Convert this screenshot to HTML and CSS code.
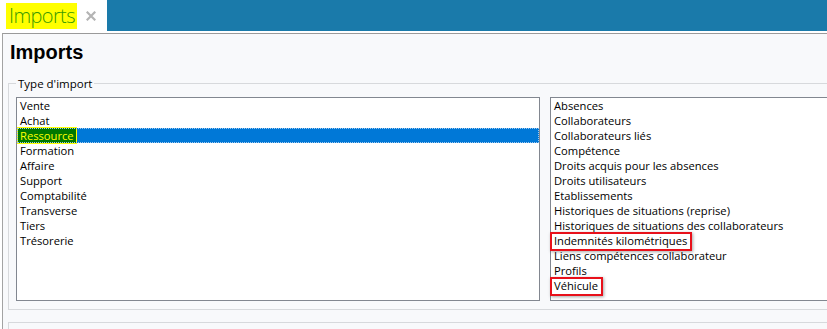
FILE: index.html
```html
<!DOCTYPE html>
<html lang="fr">
<head>
<meta charset="utf-8">
<title>Imports</title>
<link rel="stylesheet" href="styles.css">
</head>
<body>
<div class="tabbar">
  <div class="tab">
    <span class="tab-title">Imports</span>
    <svg class="tab-close" width="10" height="10" viewBox="0 0 10 10"><path d="M1.5 1.5 L8.5 8.5 M8.5 1.5 L1.5 8.5" stroke="#b4b4b4" stroke-width="2.2" stroke-linecap="square"/></svg>
  </div>
  <div class="tab-fill"></div>
</div>
<div class="panel">
  <h1 class="title">Imports</h1>
  <fieldset class="group">
    <legend class="group-legend">Type d'import</legend>
    <div class="lists">
      <ul class="listbox listbox-left">
        <li class="item">Vente</li>
        <li class="item">Achat</li>
        <li class="item item-selected"><span class="hl">Ressource</span></li>
        <li class="item">Formation</li>
        <li class="item">Affaire</li>
        <li class="item">Support</li>
        <li class="item">Comptabilité</li>
        <li class="item">Transverse</li>
        <li class="item">Tiers</li>
        <li class="item">Trésorerie</li>
      </ul>
      <ul class="listbox listbox-right">
        <li class="item">Absences</li>
        <li class="item">Collaborateurs</li>
        <li class="item">Collaborateurs liés</li>
        <li class="item">Compétence</li>
        <li class="item">Droits acquis pour les absences</li>
        <li class="item">Droits utilisateurs</li>
        <li class="item">Etablissements</li>
        <li class="item">Historiques de situations (reprise)</li>
        <li class="item">Historiques de situations des collaborateurs</li>
        <li class="item"><span class="mark">Indemnités kilométriques</span></li>
        <li class="item">Liens compétences collaborateur</li>
        <li class="item">Profils</li>
        <li class="item"><span class="mark">Véhicule</span></li>
      </ul>
    </div>
  </fieldset>
  <div class="group2"></div>
</div>
</body>
</html>
```
FILE: styles.css
```css
html, body {
  margin: 0;
  padding: 0;
  background: #ffffff;
  overflow: hidden;
}
body {
  width: 827px;
  height: 329px;
  font-family: "Open Sans", "Noto Sans", sans-serif;
}
.tabbar {
  display: flex;
  height: 31px;
  margin-bottom: 2px;
}
.tab {
  width: 107px;
  display: flex;
  align-items: center;
  background: #ffffff;
}
.tab-title {
  margin-left: 6px;
  margin-top: 1px;
  height: 26px;
  padding: 0 2px 0 3px;
  background: #ffff00;
  color: #3a9a00;
  font-family: "Open Sans", sans-serif;
  font-weight: 300;
  font-size: 20px;
  line-height: 26px;
  letter-spacing: -0.6px;
}
.tab-close {
  margin-left: 9px;
  margin-top: 1px;
}
.tab-fill {
  flex: 1;
  background: #1a7aaa;
}
.panel {
  margin-left: 2px;
  border-left: 1px solid #a3a3a3;
  border-top: 1px solid #9a9a9a;
  background: #f8f9fb;
  height: 295px;
  padding-left: 5px;
  overflow: hidden;
}
.title {
  margin: 0 0 0 2px;
  padding-top: 7px;
  font-family: "Liberation Sans", Arial, sans-serif;
  font-weight: bold;
  font-size: 20px;
  line-height: 23px;
  color: #000;
  height: 35px;
}
.group {
  margin: 0;
  width: 840px;
  border: 1px solid #d7d9dc;
  padding: 6px 0 6px 7px;
  box-sizing: border-box;
  height: 234px;
}
.group-legend {
  padding: 0 2px;
  margin-left: 0;
  font-size: 11.5px;
  line-height: 15px;
  color: #000;
}
.lists {
  display: flex;
  gap: 10px;
}
.listbox {
  list-style: none;
  margin: 0;
  padding: 0;
  height: 202px;
  background: #ffffff;
  border: 1px solid #828790;
}
.listbox-left {
  width: 522px;
}
.listbox-right {
  width: 300px;
}
.item {
  font-size: 11.2px;
  line-height: 15px;
  height: 15px;
  padding-left: 3px;
  color: #000;
  white-space: nowrap;
}
.item-selected {
  background: #0078d7;
  outline: 1px dotted #9ec8ef;
  outline-offset: -1px;
  padding-left: 0;
}
.hl {
  display: inline-block;
  background: #007800;
  color: #ffff00;
  border: 1px solid #ffff00;
  margin-top: -1px;
  padding: 0 2px;
  line-height: 15px;
  height: 15px;
}
.mark {
  position: relative;
}
.mark::after {
  content: "";
  position: absolute;
  left: -4px;
  right: -5px;
  top: -1px;
  bottom: -3px;
  border: 2px solid #e8101a;
  box-shadow: 1px 1px 3px rgba(0, 0, 0, 0.35);
}
.group2 {
  margin-top: 12px;
  width: 840px;
  height: 9px;
  border: 1px solid #d7d9dc;
  border-bottom: none;
}
```
